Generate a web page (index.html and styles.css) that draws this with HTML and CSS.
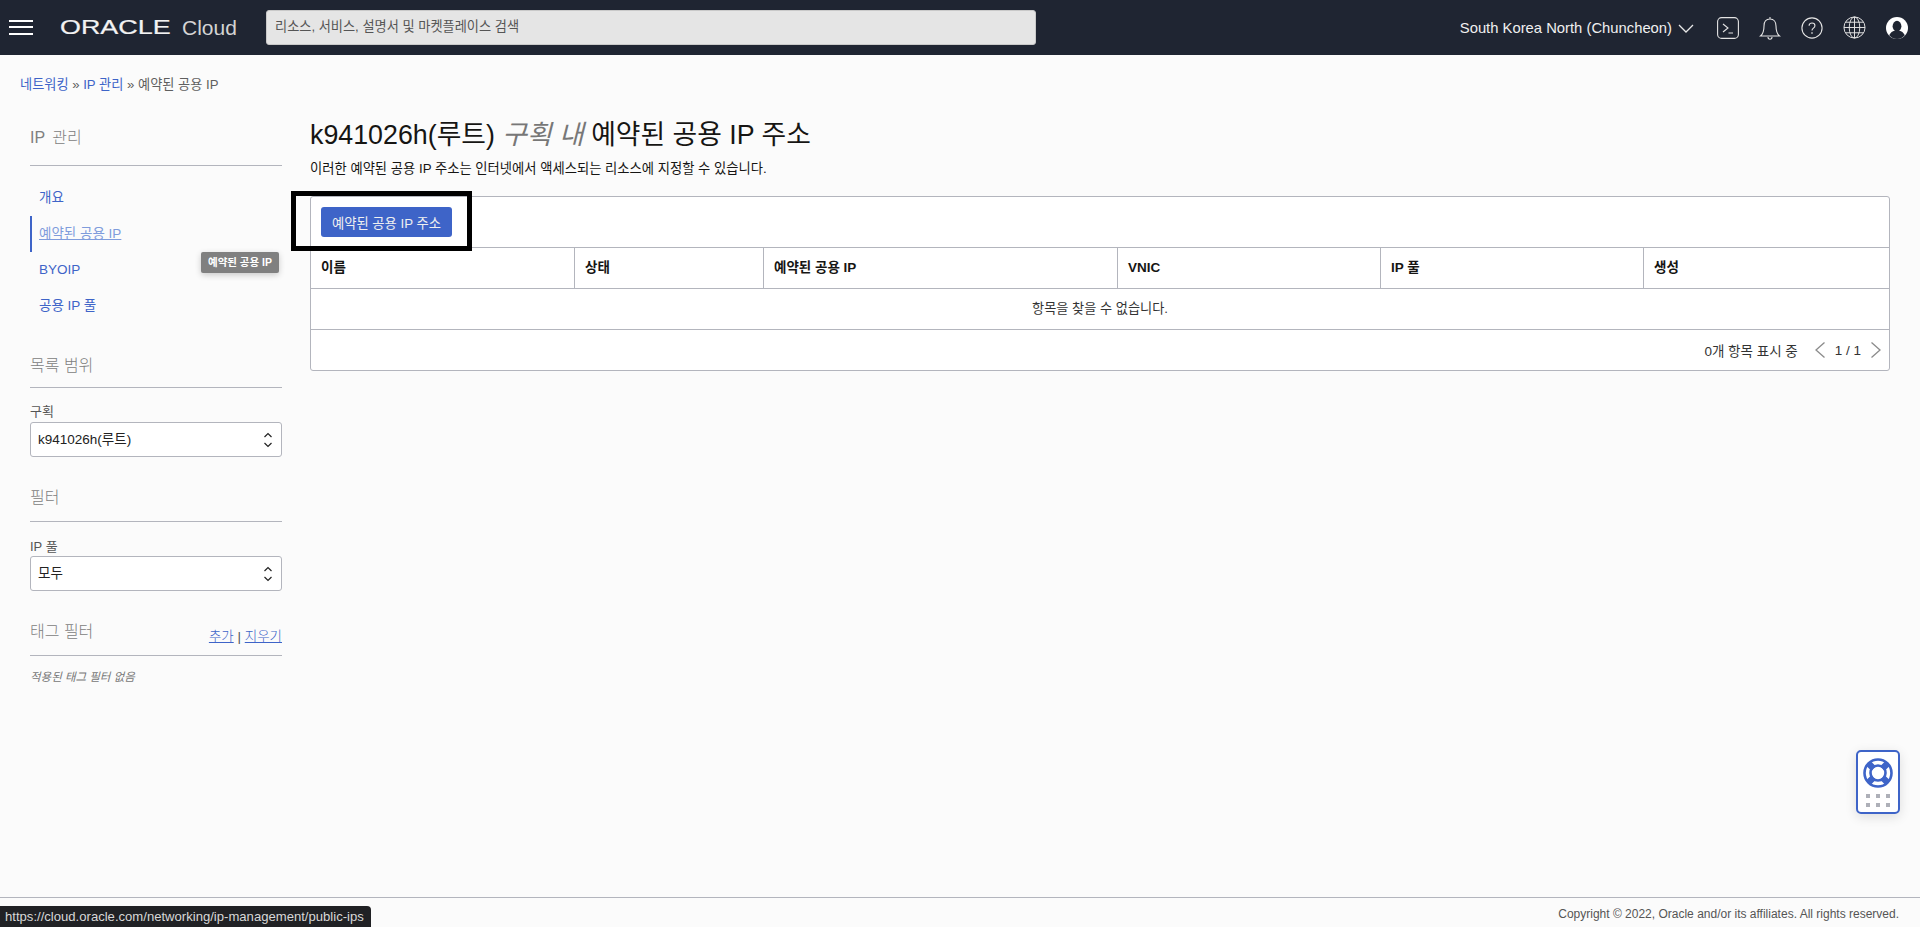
FILE: index.html
```html
<!DOCTYPE html>
<html lang="ko">
<head>
<meta charset="utf-8">
<title>예약된 공용 IP 주소</title>
<link rel="stylesheet" href="styles.css">
</head>
<body>
<header class="topbar">
  <button class="burger" aria-label="메뉴"><span></span><span></span><span></span></button>
  <div class="brand"><span class="oracle">ORACLE</span><span class="cloud">Cloud</span></div>
  <div class="search">리소스, 서비스, 설명서 및 마켓플레이스 검색</div>
  <div class="topright">
    <span class="region">South Korea North (Chuncheon)</span>
    <svg class="chev" width="16" height="10" viewBox="0 0 16 10"><path d="M1 1l7 7 7-7" fill="none" stroke="#e8e8e8" stroke-width="1.3"/></svg>
    <svg class="ticon" width="22" height="22" viewBox="0 0 22 22" fill="none" stroke="#e4e4e4" stroke-width="1.1"><rect x=".6" y=".6" width="20.8" height="20.8" rx="4"/><path d="M6 7l5 4-5 4M11.500 16H16"/></svg>
    <svg class="ticon" width="22" height="24" viewBox="0 0 22 24" fill="none" stroke="#e4e4e4" stroke-width="1.1"><path d="M11 3c-4 0-6 3-6 7 0 5-1 8-3.500 10h19C18 18 17 15 17 10c0-4-2-7-6-7zM11 3V1M9 21c0 3 4 3 4 0"/></svg>
    <svg class="ticon" width="22" height="22" viewBox="0 0 24 24" fill="none" stroke="#e4e4e4" stroke-width="1.2"><circle cx="12" cy="12" r="11"/><path d="M8.800 9.500c0-4 6.400-4 6.400 0 0 2.800-3.200 2.600-3.200 5.300"/><path d="M12 16.500v1.800" stroke-width="1.500"/></svg>
    <svg class="ticon" width="23" height="23" viewBox="0 0 24 24" fill="none" stroke="#e4e4e4" stroke-width="1"><circle cx="12" cy="12" r="11"/><ellipse cx="12" cy="12" rx="5.500" ry="11"/><path d="M12 1v22M1 12h22M2.500 6.500h19M2.500 17.500h19"/></svg>
    <svg class="ticon" width="22" height="22" viewBox="0 0 24 24"><circle cx="12" cy="12" r="12" fill="#fff"/><ellipse cx="12" cy="10" rx="4.800" ry="5.800" fill="#1f2532"/><path d="M3.500 20c2-4.500 5-5 8.500-5s6.500.5 8.500 5c-2 2.500-5 4-8.500 4s-6.500-1.500-8.500-4z" fill="#1f2532"/></svg>
  </div>
</header>

<nav class="crumbs"><a href="#">네트워킹</a> » <a href="#">IP 관리</a> » 예약된 공용 IP</nav>

<div class="page">
  <aside class="side">
    <h3 class="side-title first">IP 관리</h3>
    <ul class="menu">
      <li><a href="#">개요</a></li>
      <li class="active"><a href="#">예약된 공용 IP</a></li>
      <li><a href="#">BYOIP</a></li>
      <li><a href="#">공용 IP 풀</a></li>
    </ul>
    <h3 class="side-title scope">목록 범위</h3>
    <label class="field-label">구획</label>
    <div class="select">k941026h(루트)
      <svg width="10" height="18" viewBox="0 0 10 18" fill="none" stroke="#222" stroke-width="1.200"><path d="M1.500 6L5 2.500 8.500 6M1.500 12L5 15.500 8.500 12"/></svg>
    </div>
    <h3 class="side-title filter">필터</h3>
    <label class="field-label tight">IP 풀</label>
    <div class="select">모두
      <svg width="10" height="18" viewBox="0 0 10 18" fill="none" stroke="#222" stroke-width="1.200"><path d="M1.500 6L5 2.500 8.500 6M1.500 12L5 15.500 8.500 12"/></svg>
    </div>
    <h3 class="side-title tag"><span>태그 필터</span><span class="tag-links"><a href="#">추가</a> | <a href="#">지우기</a></span></h3>
    <p class="none">적용된 태그 필터 없음</p>
  </aside>

  <main class="main">
    <h1 class="title">k941026h(루트) <em>구획 내</em> 예약된 공용 IP 주소</h1>
    <p class="desc">이러한 예약된 공용 IP 주소는 인터넷에서 액세스되는 리소스에 지정할 수 있습니다.</p>
    <section class="panel">
      <div class="toolbar"><button class="primary">예약된 공용 IP 주소</button></div>
      <div class="row head">
        <div>이름</div><div>상태</div><div>예약된 공용 IP</div><div>VNIC</div><div>IP 풀</div><div>생성</div>
      </div>
      <div class="empty">항목을 찾을 수 없습니다.</div>
      <div class="pager">
        <span class="count">0개 항목 표시 중</span>
        <svg width="12" height="18" viewBox="0 0 12 18" fill="none" stroke="#8b8b8b" stroke-width="1.300"><path d="M10.500 1.500L2 9l8.500 7.500"/></svg>
        <span class="pages">1 / 1</span>
        <svg width="12" height="18" viewBox="0 0 12 18" fill="none" stroke="#8b8b8b" stroke-width="1.300"><path d="M1.500 1.500L10 9l-8.500 7.500"/></svg>
      </div>
    </section>
  </main>
</div>

<footer class="foot">Copyright © 2022, Oracle and/or its affiliates. All rights reserved.</footer>

<div class="callout"></div>
<div class="tooltip">예약된 공용 IP</div>
<div class="status">https://cloud.oracle.com/networking/ip-management/public-ips</div>
<div class="help">
  <svg width="30" height="30" viewBox="0 0 30 30" fill="none" stroke="#3e64c8"><circle cx="15" cy="15" r="13.500" stroke-width="2.600"/><circle cx="15" cy="15" r="7.500" stroke-width="2.600"/><path d="M5.500 5.500l5 5M24.500 5.500l-5 5M5.500 24.500l5-5M24.500 24.500l-5-5" stroke-width="6.500"/></svg>
  <div class="dots"><i></i><i></i><i></i><i></i><i></i><i></i></div>
</div>
</body>
</html>
```

FILE: styles.css
```css
* { box-sizing: border-box; }
html, body { height: 100%; }
body {
  margin: 0;
  height: 927px;
  overflow: hidden;
  display: flex;
  flex-direction: column;
  background: #fbfbfb;
  color: #161513;
  font-family: "Liberation Sans", "Noto Sans CJK KR", sans-serif;
  font-size: 13px;
}
a { color: #3e64c8; text-decoration: none; }
ul { list-style: none; margin: 0; padding: 0; }
h1, h3, p { margin: 0; font-weight: normal; }

.topbar {
  flex: none;
  height: 55px;
  background: #1f2532;
  display: flex;
  align-items: center;
  padding-left: 9px;
}
.burger {
  width: 24px;
  height: 15px;
  padding: 0;
  border: 0;
  background: none;
  display: flex;
  flex-direction: column;
  justify-content: space-between;
  margin-top: -1px;
}
.burger span { display: block; height: 2px; background: #fff; }
.brand { width: 233px; padding-left: 27px; display: flex; align-items: center; color: #f2f2f2; }
.oracle {
  display: inline-block;
  width: 114px;
  font-size: 19.500px;
  transform: scaleX(1.380);
  transform-origin: left center;
  -webkit-text-stroke: .2px #f2f2f2;
}
.cloud { font-size: 21px; margin-left: 8px; color: #d4d4d4; }
.search {
  width: 770px;
  height: 35px;
  background: #e5e5e5;
  border: 1px solid #c9c9c9;
  border-radius: 3px;
  color: #555;
  font-size: 13.200px;
  line-height: 32px;
  padding-left: 8px;
}
.topright { margin-left: auto; display: flex; align-items: center; padding-right: 12px; }
.region { color: #f0f0f0; font-size: 14.800px; }
.chev { margin: 2px 0 0 6px; }
.ticon { margin-left: 20px; }
.chev + .ticon { margin-left: 23px; }

.crumbs { flex: none; padding: 21px 0 0 20px; height: 77px; font-size: 13.200px; line-height: 17px; color: #5f5f5f; }

.page { flex: 1; display: flex; min-height: 0; }
.side { flex: none; margin-left: 30px; width: 252px; }
.side-title {
  color: #808080;
  font-size: 16px;
  font-weight: 300;
  line-height: 24px;
  border-bottom: 1px solid #b3b5bd;
  display: flex;
  justify-content: space-between;
  align-items: flex-end;
}
.side-title.first { height: 34px; padding-bottom: 18px; line-height: 18px; word-spacing: 3px; }
.side-title.scope { margin-top: 29px; height: 35px; padding-bottom: 9px; }
.side-title.filter { margin-top: 28px; height: 37px; padding-bottom: 11px; }
.side-title.tag { margin-top: 29px; height: 36px; padding-bottom: 11px; }
.menu { padding-top: 14px; }
.menu li { height: 36px; padding-left: 9px; font-size: 13.500px; line-height: 35px; }
.menu li.active { border-left: 2px solid #3e64c8; padding-left: 7px; }
.menu li.active a { color: #7f9cdc; text-decoration: underline; }
.field-label { display: block; margin-top: 14px; height: 20px; font-size: 13px; line-height: 20px; color: #555; }
.field-label.tight { margin-top: 16px; height: 18px; line-height: 18px; }
.select {
  height: 35px;
  background: #fff;
  border: 1px solid #b3b5bd;
  border-radius: 3px;
  display: flex;
  align-items: center;
  justify-content: space-between;
  padding: 0 8px 4px 7px;
  font-size: 13.500px;
  color: #222;
}
.select svg { margin-top: 4px; }
.tag-links { font-size: 13.500px; line-height: 20px; color: #555; margin-bottom: -3px; }
.tag-links a { text-decoration: underline; }
.none { margin-top: 12px; font-size: 11.500px; font-style: italic; color: #777; }

.main { flex: 1; min-width: 0; margin-left: 28px; margin-right: 30px; }
.title { font-size: 26.800px; line-height: 34px; margin-top: -14px; }
.title em { color: #777; font-style: italic; }
.desc { margin-top: 7px; height: 37px; font-size: 13.300px; line-height: 20px; }
.panel { background: #fff; border: 1px solid #b3b5bd; border-radius: 3px; }
.toolbar { height: 50px; padding: 10px 0 0 10px; }
.primary {
  width: 131px;
  height: 30px;
  background: #3e64c8;
  color: #f0f0f0;
  border: 0;
  border-radius: 3px;
  font: 13.300px "Liberation Sans", "Noto Sans CJK KR", sans-serif;
}
.row.head {
  display: grid;
  grid-template-columns: 263px 189px 354px 263px 263px 1fr;
  height: 42px;
  border-top: 1px solid #b3b5bd;
  border-bottom: 1px solid #b3b5bd;
  font-weight: bold;
  font-size: 13.500px;
  line-height: 40px;
}
.row.head > div { padding-left: 10px; border-left: 1px solid #b3b5bd; }
.row.head > div:first-child { border-left: 0; }
.empty { height: 41px; text-align: center; font-size: 13.200px; line-height: 40px; color: #333; border-bottom: 1px solid #b3b5bd; }
.pager { height: 40px; display: flex; align-items: center; justify-content: flex-end; padding: 0 7px 0 0; font-size: 13.500px; color: #333; }
.count { margin-right: 16px; }
.pages { margin: 0 9px; }

.foot {
  flex: none;
  height: 30px;
  border-top: 1px solid #b3b5bd;
  text-align: right;
  padding: 9px 21px 0 0;
  font-size: 12px;
  line-height: 14px;
  color: #555;
}

.callout { position: absolute; left: 291px; top: 191px; width: 181px; height: 60px; border: 5px solid #000; }
.tooltip {
  position: absolute;
  left: 201px;
  top: 252px;
  width: 78px;
  height: 21px;
  background: #808080;
  border-radius: 2px;
  color: #fff;
  font-size: 10.500px;
  font-weight: bold;
  line-height: 20px;
  text-align: center;
  box-shadow: 0 2px 6px rgba(0,0,0,.2);
}
.status {
  position: absolute;
  left: 0;
  bottom: 0;
  width: 371px;
  height: 21px;
  background: #202124;
  border-top-right-radius: 4px;
  color: #d8d8d8;
  font-size: 13.100px;
  line-height: 21px;
  padding-left: 5px;
}
.help {
  position: absolute;
  left: 1856px;
  top: 750px;
  width: 44px;
  height: 64px;
  background: #fff;
  border: 2px solid #3e64c8;
  border-radius: 5px;
  box-shadow: 0 3px 12px rgba(0,0,0,.12);
  display: flex;
  flex-direction: column;
  align-items: center;
  padding-top: 6px;
}
.dots { margin-top: 6px; display: grid; grid-template-columns: repeat(3, 4px); gap: 5px 6px; }
.dots i { display: block; height: 4px; background: #aeb0b8; }
```
